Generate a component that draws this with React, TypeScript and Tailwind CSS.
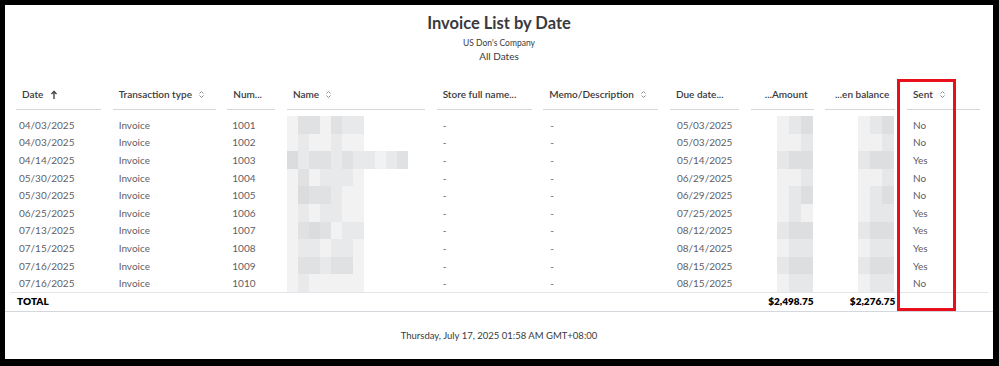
import React from 'react'

type Row = {
  date: string
  num: string
  due: string
  sent: string
  name: string[]
  amt: string[]
  bal: string[]
}

const g1 = '#dcdedf'
const g2 = '#e6e7e8'
const g3 = '#f1f1f2'
const g4 = '#d6d9db'

const rows: Row[] = [
  { date: '04/03/2025', num: '1001', due: '05/03/2025', sent: 'No', name: [g3, g1, g1, g3, g1, g2, g2], amt: [g3, g2, g1], bal: [g3, g2, g1] },
  { date: '04/03/2025', num: '1002', due: '05/03/2025', sent: 'No', name: [g3, g2, g3, g3, g2, g3, g3], amt: [g3, g3, g2], bal: [g3, g3, g2] },
  { date: '04/14/2025', num: '1003', due: '05/14/2025', sent: 'Yes', name: [g4, g2, g1, g1, g2, g1, g2, g2, g3, g2, g1], amt: [g2, g1, g1], bal: [g2, g1, g1] },
  { date: '05/30/2025', num: '1004', due: '06/29/2025', sent: 'No', name: [g3, g1, g3, g2, g2, g2, g3], amt: [g3, g3, g2], bal: [g3, g3, g2] },
  { date: '05/30/2025', num: '1005', due: '06/29/2025', sent: 'No', name: [g3, g4, g1, g1, g2, g3, g3], amt: [g3, g2, g1], bal: [g3, g2, g1] },
  { date: '06/25/2025', num: '1006', due: '07/25/2025', sent: 'Yes', name: [g3, g2, g3, g2, g2, g3, g3], amt: [g3, g2, g3], bal: [g3, g2, g2] },
  { date: '07/13/2025', num: '1007', due: '08/12/2025', sent: 'Yes', name: [g3, g1, g4, g1, g3, g2, g2], amt: [g2, g1, g1], bal: [g2, g1, g1] },
  { date: '07/15/2025', num: '1008', due: '08/14/2025', sent: 'Yes', name: [g3, g2, g2, g3, g2, g2, g3], amt: [g3, g2, g2], bal: [g3, g2, g2] },
  { date: '07/16/2025', num: '1009', due: '08/15/2025', sent: 'Yes', name: [g3, g1, g1, g2, g1, g1, g3], amt: [g2, g1, g1], bal: [g2, g1, g1] },
  { date: '07/16/2025', num: '1010', due: '08/15/2025', sent: 'No', name: [g3, g2, g3, g3, g3, g3, g3], amt: [g3, g2, g2], bal: [g3, g2, g2] },
]

const grid =
  'grid grid-cols-[85px_103px_48px_138px_95px_115px_69px_63px_70px_73px] gap-x-[11.67px]'

function SortIcon() {
  return (
    <svg width="7" height="9" viewBox="0 0 7 9" className="ml-[6px] shrink-0" fill="none" stroke="#8d9096" strokeWidth="1">
      <path d="M1.5 3.5 L3.5 1.5 L5.5 3.5" />
      <path d="M1.5 5.5 L3.5 7.5 L5.5 5.5" />
    </svg>
  )
}

function UpArrow() {
  return (
    <svg width="8" height="10" viewBox="0 0 8 10" className="ml-[7px] shrink-0" fill="none" stroke="#393a3d" strokeWidth="1.3">
      <path d="M4 9 V1.5" />
      <path d="M1.5 4 L4 1.5 L6.5 4" />
    </svg>
  )
}

function Head({ children, right, icon }: { children: React.ReactNode; right?: boolean; icon?: React.ReactNode }) {
  return (
    <div
      className={`flex items-center h-[30px] border-b border-[#d4d7dc] px-[6px] ${right ? 'justify-end' : ''}`}
    >
      <span className="whitespace-nowrap">{children}</span>
      {icon}
    </div>
  )
}

function Blocks({ colors, right, w = 'w-[12px]' }: { colors: string[]; right?: boolean; w?: string }) {
  return (
    <div className={`flex h-full items-center ${right ? 'justify-end pr-[1px]' : ''}`}>
      {colors.map((c, i) => (
        <div key={i} className={`${w} h-[17.67px]`} style={{ backgroundColor: c }} />
      ))}
    </div>
  )
}

export default function App() {
  return (
    <div
      className="w-[999px] h-[366px] bg-black pt-[5px] pl-[5px] pr-[6px] pb-[7px]"
      style={{ fontFamily: 'Lato, "Open Sans", sans-serif' }}
    >
      <div className="relative w-full h-full bg-white flex flex-col">
        <div className="flex flex-col items-center pt-[8px] text-[#393a3d]">
          <div className="text-[16.5px] leading-[20px] font-bold">Invoice List by Date</div>
          <div className="text-[8.5px] leading-[12px] mt-[4px]">US Don&apos;s Company</div>
          <div className="text-[10px] leading-[12px] mt-[1px]">All Dates</div>
        </div>

        <div className="pl-[11px] mt-[18px]">
          <div className={`${grid} text-[10px] font-semibold text-[#393a3d]`}>
            <Head icon={<UpArrow />}>Date</Head>
            <Head icon={<SortIcon />}>Transaction type</Head>
            <Head>Num...</Head>
            <Head icon={<SortIcon />}>Name</Head>
            <Head>Store full name...</Head>
            <Head icon={<SortIcon />}>Memo/Description</Head>
            <Head>Due date...</Head>
            <Head right>...Amount</Head>
            <Head right>...en balance</Head>
            <Head icon={<SortIcon />}>Sent</Head>
          </div>
        </div>

        <div className="mx-[5px] pt-[6px] border-b border-[#e3e5e8] text-[10px] text-[#5f6066]">
          {rows.map((r, i) => (
            <div key={i} className={`${grid} pl-[6px] h-[17.6px] items-center`}>
              <div className="px-[4px] -ml-[1px] pt-[1px]">{r.date}</div>
              <div className="px-[6px] pt-[1px]">Invoice</div>
              <div className="px-[5px] pt-[1px]">{r.num}</div>
              <div className="h-full opacity-90">
                <Blocks colors={r.name} w="w-[11px]" />
              </div>
              <div className="px-[6px] pt-[1px]">-</div>
              <div className="px-[7px] pt-[1px]">-</div>
              <div className="px-[7px] pt-[1px]">{r.due}</div>
              <div className="h-full">
                <Blocks colors={r.amt} right />
              </div>
              <div className="h-full">
                <Blocks colors={r.bal} right />
              </div>
              <div className="px-[6px] pt-[1px]">{r.sent}</div>
            </div>
          ))}
        </div>

        <div className="border-b border-[#d4d7dc] h-[19px] flex items-center">
          <div className={`${grid} pl-[11px] w-full text-[10px] font-extrabold text-black`}>
            <div className="col-span-7 px-[1px]">TOTAL</div>
            <div className="text-right">$2,498.75</div>
            <div className="text-right">$2,276.75</div>
            <div />
          </div>
        </div>

        <div className="text-center text-[9.5px] leading-[12px] text-[#393a3d] mt-[18px]">
          Thursday, July 17, 2025 01:58 AM GMT+08:00
        </div>

        <div className="absolute left-[892px] top-[74px] w-[59px] h-[232px] border-[3px] border-[#e8101c]" />
      </div>
    </div>
  )
}
